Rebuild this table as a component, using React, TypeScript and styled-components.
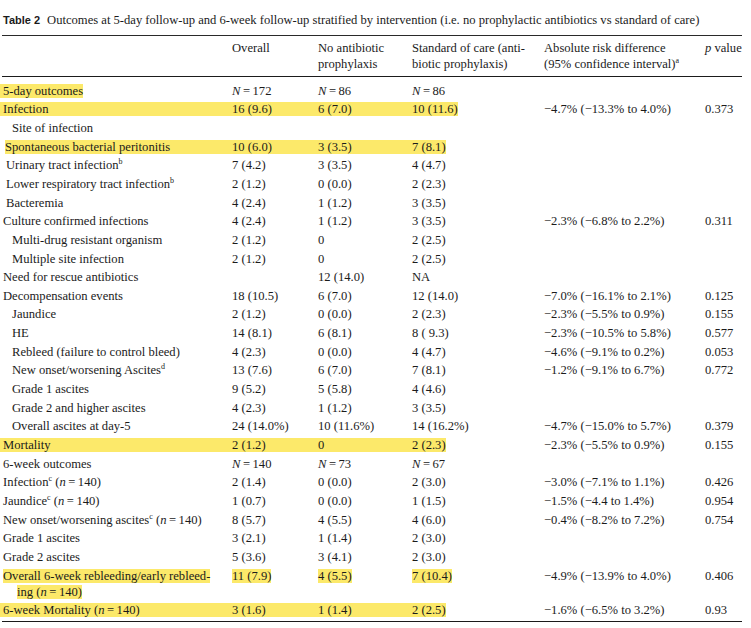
import React from 'react';
import styled, { createGlobalStyle } from 'styled-components';

const HL = '#fce96a';

const GlobalStyle = createGlobalStyle`
  body {
    margin: 0;
    background: #fff;
  }
`;

type Mode = 'none' | 'label' | 'row' | 'cells';

interface RowData {
  label: React.ReactNode;
  indent?: number;
  pad?: number;
  hl?: Mode;
  wrap?: boolean;
  v?: React.ReactNode[];
  ard?: string;
  p?: string;
}

const Page = styled.div`
  padding-top: 12px;
  width: 751px;
  font-family: 'Liberation Serif', 'Times New Roman', serif;
  font-size: 12.6px;
  color: #1b1b1b;
`;

const Caption = styled.div`
  padding-left: 3px;
  line-height: 16px;
  margin-bottom: 7px;
  white-space: nowrap;
`;

const CaptionTag = styled.span`
  font-family: 'Liberation Sans', Arial, sans-serif;
  font-weight: bold;
  font-size: 11px;
  margin-right: 7px;
`;

const Table = styled.table`
  margin-left: 2px;
  width: 740px;
  border-collapse: collapse;
  table-layout: fixed;

  tbody tr:first-child td {
    padding-top: 5.6px;
  }
  tbody tr:last-child td {
    padding-bottom: 3px;
    border-bottom: 1.5px solid #1b1b1b;
  }
`;

const Col = styled.col<{ $w: number }>`
  width: ${(p) => p.$w}px;
`;

const Head = styled.th<{ $pl?: number }>`
  text-align: left;
  vertical-align: top;
  font-weight: normal;
  line-height: 16px;
  padding: 3.5px 0 4.5px ${(p) => p.$pl ?? 0}px;
  border-top: 1px solid #2a2a2a;
  border-bottom: 1.5px solid #1b1b1b;
  white-space: nowrap;
`;

const Cell = styled.td<{ $pl?: number; $wrap?: boolean }>`
  vertical-align: top;
  line-height: 16px;
  padding: 1.33px 0 1.33px ${(p) => p.$pl ?? 0}px;
  white-space: nowrap;
  ${(p) => (p.$wrap ? 'padding-left: 15px; text-indent: -14px;' : '')}
`;

// full-width band, same height as an inline highlight
const Fill = styled.div<{ $bleed?: number; $pad?: number }>`
  margin-left: ${(p) => -(p.$bleed ?? 0)}px;
  padding-left: ${(p) => (p.$bleed ?? 0) + (p.$pad ?? 0)}px;
  background: linear-gradient(
    to bottom,
    transparent 1px,
    ${HL} 1px,
    ${HL} 15.2px,
    transparent 15.2px
  );
`;

const Mark = styled.span<{ $bleed?: number }>`
  background: ${HL};
  margin-left: ${(p) => -(p.$bleed ?? 0)}px;
  padding-left: ${(p) => p.$bleed ?? 0}px;
`;

const Sup = styled.sup`
  font-size: 8px;
  line-height: 0;
  vertical-align: 0;
  position: relative;
  top: -5px;
`;

const I = styled.i``;

const N = (n: number) => (
  <>
    <I>N</I>{'\u2009=\u2009'}{n}
  </>
);

const n140 = (
  <>
    (<I>n</I>{'\u2009=\u2009'}140)
  </>
);

const rows: RowData[] = [
  { label: '5-day outcomes', hl: 'label', v: [N(172), N(86), N(86)] },
  { label: 'Infection', hl: 'row', v: ['16 (9.6)', '6 (7.0)', '10 (11.6)'], ard: '−4.7% (−13.3% to 4.0%)', p: '0.373' },
  { label: 'Site of infection', indent: 10 },
  { label: 'Spontaneous bacterial peritonitis', indent: 3, pad: 2, hl: 'row', v: ['10 (6.0)', '3 (3.5)', '7 (8.1)'] },
  { label: <>Urinary tract infection<Sup>b</Sup></>, indent: 4, v: ['7 (4.2)', '3 (3.5)', '4 (4.7)'] },
  { label: <>Lower respiratory tract infection<Sup>b</Sup></>, indent: 4, v: ['2 (1.2)', '0 (0.0)', '2 (2.3)'] },
  { label: 'Bacteremia', indent: 4, v: ['4 (2.4)', '1 (1.2)', '3 (3.5)'] },
  { label: 'Culture confirmed infections', v: ['4 (2.4)', '1 (1.2)', '3 (3.5)'], ard: '−2.3% (−6.8% to 2.2%)', p: '0.311' },
  { label: 'Multi-drug resistant organism', indent: 10, v: ['2 (1.2)', '0', '2 (2.5)'] },
  { label: 'Multiple site infection', indent: 10, v: ['2 (1.2)', '0', '2 (2.5)'] },
  { label: 'Need for rescue antibiotics', v: ['', '12 (14.0)', 'NA'] },
  { label: 'Decompensation events', v: ['18 (10.5)', '6 (7.0)', '12 (14.0)'], ard: '−7.0% (−16.1% to 2.1%)', p: '0.125' },
  { label: 'Jaundice', indent: 10, v: ['2 (1.2)', '0 (0.0)', '2 (2.3)'], ard: '−2.3% (−5.5% to 0.9%)', p: '0.155' },
  { label: 'HE', indent: 10, v: ['14 (8.1)', '6 (8.1)', '8 ( 9.3)'], ard: '−2.3% (−10.5% to 5.8%)', p: '0.577' },
  { label: 'Rebleed (failure to control bleed)', indent: 10, v: ['4 (2.3)', '0 (0.0)', '4 (4.7)'], ard: '−4.6% (−9.1% to 0.2%)', p: '0.053' },
  { label: <>New onset/worsening Ascites<Sup>d</Sup></>, indent: 10, v: ['13 (7.6)', '6 (7.0)', '7 (8.1)'], ard: '−1.2% (−9.1% to 6.7%)', p: '0.772' },
  { label: 'Grade 1 ascites', indent: 10, v: ['9 (5.2)', '5 (5.8)', '4 (4.6)'] },
  { label: 'Grade 2 and higher ascites', indent: 10, v: ['4 (2.3)', '1 (1.2)', '3 (3.5)'] },
  { label: 'Overall ascites at day-5', indent: 10, v: ['24 (14.0%)', '10 (11.6%)', '14 (16.2%)'], ard: '−4.7% (−15.0% to 5.7%)', p: '0.379' },
  { label: 'Mortality', hl: 'row', v: ['2 (1.2)', '0', '2 (2.3)'], ard: '−2.3% (−5.5% to 0.9%)', p: '0.155' },
  { label: '6-week outcomes', v: [N(140), N(73), N(67)] },
  { label: <>Infection<Sup>c</Sup> {n140}</>, v: ['2 (1.4)', '0 (0.0)', '2 (3.0)'], ard: '−3.0% (−7.1% to 1.1%)', p: '0.426' },
  { label: <>Jaundice<Sup>c</Sup> {n140}</>, v: ['1 (0.7)', '0 (0.0)', '1 (1.5)'], ard: '−1.5% (−4.4 to 1.4%)', p: '0.954' },
  { label: <>New onset/worsening ascites<Sup>c</Sup> {n140}</>, v: ['8 (5.7)', '4 (5.5)', '4 (6.0)'], ard: '−0.4% (−8.2% to 7.2%)', p: '0.754' },
  { label: 'Grade 1 ascites', v: ['3 (2.1)', '1 (1.4)', '2 (3.0)'] },
  { label: 'Grade 2 ascites', v: ['5 (3.6)', '3 (4.1)', '2 (3.0)'] },
  {
    label: <>Overall 6-week rebleeding/early rebleed-<br />ing {n140}</>,
    hl: 'cells',
    wrap: true,
    v: ['11 (7.9)', '4 (5.5)', '7 (10.4)'],
    ard: '−4.9% (−13.9% to 4.0%)',
    p: '0.406',
  },
  { label: <>6-week Mortality {n140}</>, hl: 'row', v: ['3 (1.6)', '1 (1.4)', '2 (2.5)'], ard: '−1.6% (−6.5% to 3.2%)', p: '0.93' },
];

const LabelCell: React.FC<{ row: RowData }> = ({ row }) => {
  const indent = row.indent ?? 1;
  if (row.hl === 'row') {
    return (
      <Cell $pl={0}>
        <Fill $bleed={row.pad ? -indent : 2} $pad={row.pad ? row.pad : indent}>
          {row.label}
        </Fill>
      </Cell>
    );
  }
  if (row.hl === 'label' || row.hl === 'cells') {
    return (
      <Cell $pl={indent} $wrap={row.wrap}>
        <Mark $bleed={row.wrap ? 0 : 3}>{row.label}</Mark>
      </Cell>
    );
  }
  return <Cell $pl={indent}>{row.label}</Cell>;
};

const ValueCell: React.FC<{ mode: Mode; idx: number; children?: React.ReactNode }> = ({ mode, idx, children }) => {
  if (mode === 'row' && idx < 2) {
    return (
      <Cell>
        <Fill>{children || '\u00a0'}</Fill>
      </Cell>
    );
  }
  if ((mode === 'row' && idx === 2) || (mode === 'cells' && children)) {
    return (
      <Cell>
        <Mark>{children}</Mark>
      </Cell>
    );
  }
  return <Cell>{children}</Cell>;
};

const App: React.FC = () => {
  return (
    <Page>
      <GlobalStyle />
      <Caption>
        <CaptionTag>Table 2</CaptionTag>
        Outcomes at 5-day follow-up and 6-week follow-up stratified by intervention (i.e. no prophylactic antibiotics vs standard of care)
      </Caption>
      <Table>
        <colgroup>
          <Col $w={230} />
          <Col $w={86} />
          <Col $w={94} />
          <Col $w={132} />
          <Col $w={161} />
          <Col $w={37} />
        </colgroup>
        <thead>
          <tr>
            <Head />
            <Head>Overall</Head>
            <Head>
              No antibiotic
              <br />
              prophylaxis
            </Head>
            <Head>
              Standard of care (anti-
              <br />
              biotic prophylaxis)
            </Head>
            <Head>
              Absolute risk difference
              <br />
              (95% confidence interval)<Sup>a</Sup>
            </Head>
            <Head>
              <I>p</I> value
            </Head>
          </tr>
        </thead>
        <tbody>
          {rows.map((row, i) => {
            const mode = row.hl ?? 'none';
            const v = row.v ?? ['', '', ''];
            return (
              <tr key={i}>
                <LabelCell row={row} />
                {v.map((val, j) => (
                  <ValueCell key={j} mode={mode} idx={j}>
                    {val}
                  </ValueCell>
                ))}
                <Cell>{row.ard}</Cell>
                <Cell>{row.p}</Cell>
              </tr>
            );
          })}
        </tbody>
      </Table>
    </Page>
  );
};

export default App;
